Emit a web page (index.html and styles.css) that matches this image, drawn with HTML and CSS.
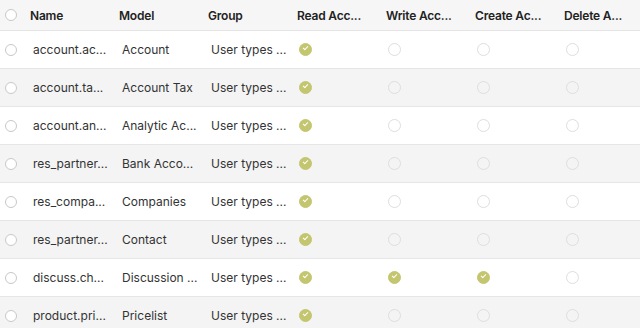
FILE: index.html
```html
<!DOCTYPE html>
<html>
<head>
<meta charset="utf-8">
<link rel="stylesheet" href="styles.css">
</head>
<body>
<table class="grid">
  <colgroup>
    <col class="c-sel"><col class="c"><col class="c"><col class="c"><col class="c"><col class="c"><col class="c"><col class="c-last">
  </colgroup>
  <thead>
    <tr>
      <th class="sel"><span class="radio"></span></th>
      <th>Name</th><th>Model</th><th>Group</th><th>Read Acc...</th><th>Write Acc...</th><th>Create Ac...</th><th>Delete A...</th>
    </tr>
  </thead>
  <tbody>
    <tr>
      <td class="sel"><span class="radio"></span></td>
      <td>account.ac...</td><td>Account</td><td>User types ...</td>
      <td><span class="chk on"></span></td><td><span class="chk"></span></td><td><span class="chk"></span></td><td><span class="chk"></span></td>
    </tr>
    <tr>
      <td class="sel"><span class="radio"></span></td>
      <td>account.ta...</td><td>Account Tax</td><td>User types ...</td>
      <td><span class="chk on"></span></td><td><span class="chk"></span></td><td><span class="chk"></span></td><td><span class="chk"></span></td>
    </tr>
    <tr>
      <td class="sel"><span class="radio"></span></td>
      <td>account.an...</td><td>Analytic Ac...</td><td>User types ...</td>
      <td><span class="chk on"></span></td><td><span class="chk"></span></td><td><span class="chk"></span></td><td><span class="chk"></span></td>
    </tr>
    <tr>
      <td class="sel"><span class="radio"></span></td>
      <td>res_partner...</td><td>Bank Acco...</td><td>User types ...</td>
      <td><span class="chk on"></span></td><td><span class="chk"></span></td><td><span class="chk"></span></td><td><span class="chk"></span></td>
    </tr>
    <tr>
      <td class="sel"><span class="radio"></span></td>
      <td>res_compa...</td><td>Companies</td><td>User types ...</td>
      <td><span class="chk on"></span></td><td><span class="chk"></span></td><td><span class="chk"></span></td><td><span class="chk"></span></td>
    </tr>
    <tr>
      <td class="sel"><span class="radio"></span></td>
      <td>res_partner...</td><td>Contact</td><td>User types ...</td>
      <td><span class="chk on"></span></td><td><span class="chk"></span></td><td><span class="chk"></span></td><td><span class="chk"></span></td>
    </tr>
    <tr>
      <td class="sel"><span class="radio"></span></td>
      <td>discuss.ch...</td><td>Discussion ...</td><td>User types ...</td>
      <td><span class="chk on"></span></td><td><span class="chk on"></span></td><td><span class="chk on"></span></td><td><span class="chk"></span></td>
    </tr>
    <tr>
      <td class="sel"><span class="radio"></span></td>
      <td>product.pri...</td><td>Pricelist</td><td>User types ...</td>
      <td><span class="chk on"></span></td><td><span class="chk"></span></td><td><span class="chk"></span></td><td><span class="chk"></span></td>
    </tr>
  </tbody>
</table>
</body>
</html>
```
FILE: styles.css
```css
html, body {
  margin: 0;
  padding: 0;
  background: #ffffff;
}
body {
  font-family: Inter, "Liberation Sans", sans-serif;
  font-size: 12px;
  color: #333333;
  overflow: hidden;
  width: 640px;
  height: 328px;
}
.grid {
  border-collapse: collapse;
  table-layout: fixed;
  width: 640px;
}
.c-sel { width: 27px; }
.c { width: 89px; }
.c-last { width: 79px; }
th {
  height: 30px;
  padding: 0 0 0 3px;
  text-align: left;
  font-weight: 600;
  letter-spacing: -0.2px;
  color: #222222;
  background: #f6f6f6;
  border-bottom: 1px solid #e4e4e4;
  white-space: nowrap;
  overflow: hidden;
}
td {
  height: 37px;
  padding: 0 0 0 6px;
  border-bottom: 1px solid #e6e6e6;
  white-space: nowrap;
  overflow: hidden;
  vertical-align: middle;
}
tbody tr:nth-child(even) td {
  background: #f4f4f4;
}
th.sel, td.sel {
  padding: 0 0 0 5px;
}
.radio {
  display: block;
  width: 10px;
  height: 10px;
  border: 1px solid #c8c8c8;
  border-radius: 50%;
  background: #ffffff;
}
.chk {
  display: block;
  width: 11px;
  height: 11px;
  margin-left: -1px;
  border: 1px solid #dedede;
  border-radius: 50%;
  background: transparent;
  position: relative;
}
.chk.on {
  background: #c3c66f;
  border-color: #c3c66f;
}
.chk.on::after {
  content: "";
  position: absolute;
  left: 3px;
  top: 2px;
  width: 4px;
  height: 2px;
  border-left: 1.5px solid #ffffff;
  border-bottom: 1.5px solid #ffffff;
  transform: rotate(-45deg);
}
```
